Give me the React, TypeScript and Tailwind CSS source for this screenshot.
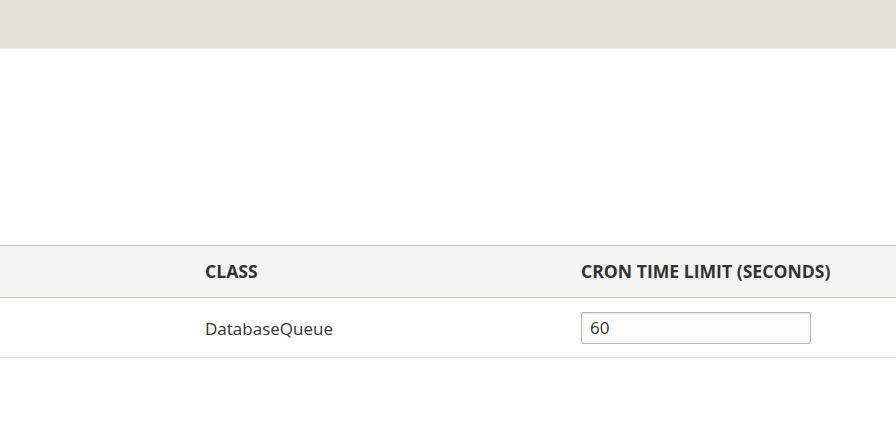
export default function App() {
  return (
    <div className="min-h-[448px] bg-white font-['Open_Sans',sans-serif] text-[#222330]">
      <div className="h-[49px] bg-[#e0e0d8] border-b border-[#ecebe6]" />
      <div className="h-[196px]" />
      <table className="w-full border-collapse">
        <thead>
          <tr className="bg-[#f5f5f2] border-y border-[#bfbfba]">
            <th className="w-[193px]" />
            <th className="w-[376px] h-[52px] px-3 text-left text-[17.6px] font-bold uppercase text-[#333]">Class</th>
            <th className="px-3 text-left text-[17.6px] font-bold uppercase text-[#333]">Cron time limit (seconds)</th>
          </tr>
        </thead>
        <tbody>
          <tr className="border-b border-[#e6e4df]">
            <td />
            <td className="h-[60px] px-3 pt-[3px] text-[17px] text-[#333]">DatabaseQueue</td>
            <td className="px-3">
              <input
                type="text"
                defaultValue="60"
                className="w-[230px] h-[32px] rounded-[2px] border border-[#b8b8b8] bg-[#fcfcfa] px-2 text-[17px] text-[#333] shadow-[inset_0_1px_2px_rgba(0,0,0,0.1)]"
              />
            </td>
          </tr>
        </tbody>
      </table>
    </div>
  );
}
